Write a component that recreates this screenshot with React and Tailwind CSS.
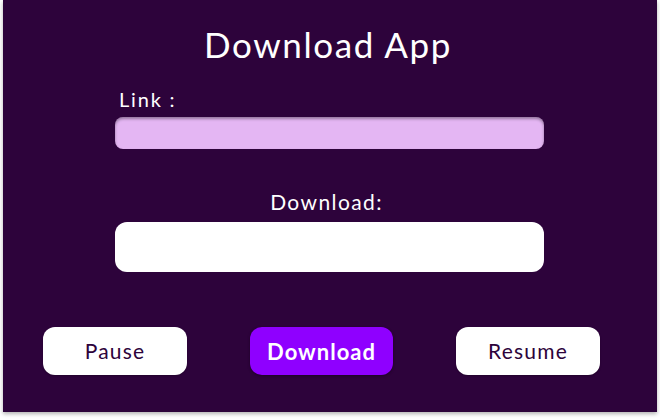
import React from 'react';

export default function App() {
  return (
    <div className="w-[660px] h-[419px] bg-white" style={{ fontFamily: 'Lato, "Open Sans", sans-serif' }}>
      <div className="ml-[3px] w-[654px] h-[412px] bg-[#2d033b] shadow-[0_2px_4px_rgba(0,0,0,0.3)] flex flex-col">
        {/* Title */}
        <h1 className="pt-[22px] pr-[4px] text-center text-white text-[35px] leading-[44px] tracking-[1.6px]">
          Download App
        </h1>

        {/* Link field */}
        <div className="mt-[21px] ml-[112px] w-[429px] flex flex-col">
          <label className="ml-[4px] text-white text-[20px] leading-[24px] tracking-[1.8px]">Link :</label>
          <div className="mt-[6px] h-[32px] rounded-[8px] bg-[#e4b6f3] shadow-[inset_0_2px_3px_rgba(0,0,0,0.35)]" />
        </div>

        {/* Download progress */}
        <div className="mt-[41px] ml-[112px] w-[429px] flex flex-col items-center">
          <span className="pr-[6px] text-white text-[21px] leading-[24px] tracking-[1.4px]">Download:</span>
          <div className="mt-[8px] w-full h-[50px] rounded-[12px] bg-white" />
        </div>

        {/* Controls */}
        <div className="mt-[55px] ml-[40px] flex gap-[63px]">
          <button className="w-[144px] h-[48px] rounded-[12px] bg-white text-[#2d033b] text-[21px] tracking-[1.2px] shadow-[0_1px_2px_rgba(0,0,0,0.25)]">
            Pause
          </button>
          <button className="w-[143px] h-[48px] rounded-[12px] bg-[#8f00ff] text-white text-[22px] font-bold tracking-[1px] shadow-[0_1px_3px_rgba(0,0,0,0.35)]">
            Download
          </button>
          <button className="w-[144px] h-[48px] rounded-[12px] bg-white text-[#2d033b] text-[21px] tracking-[1.2px] shadow-[0_1px_2px_rgba(0,0,0,0.25)]">
            Resume
          </button>
        </div>
      </div>
    </div>
  );
}
